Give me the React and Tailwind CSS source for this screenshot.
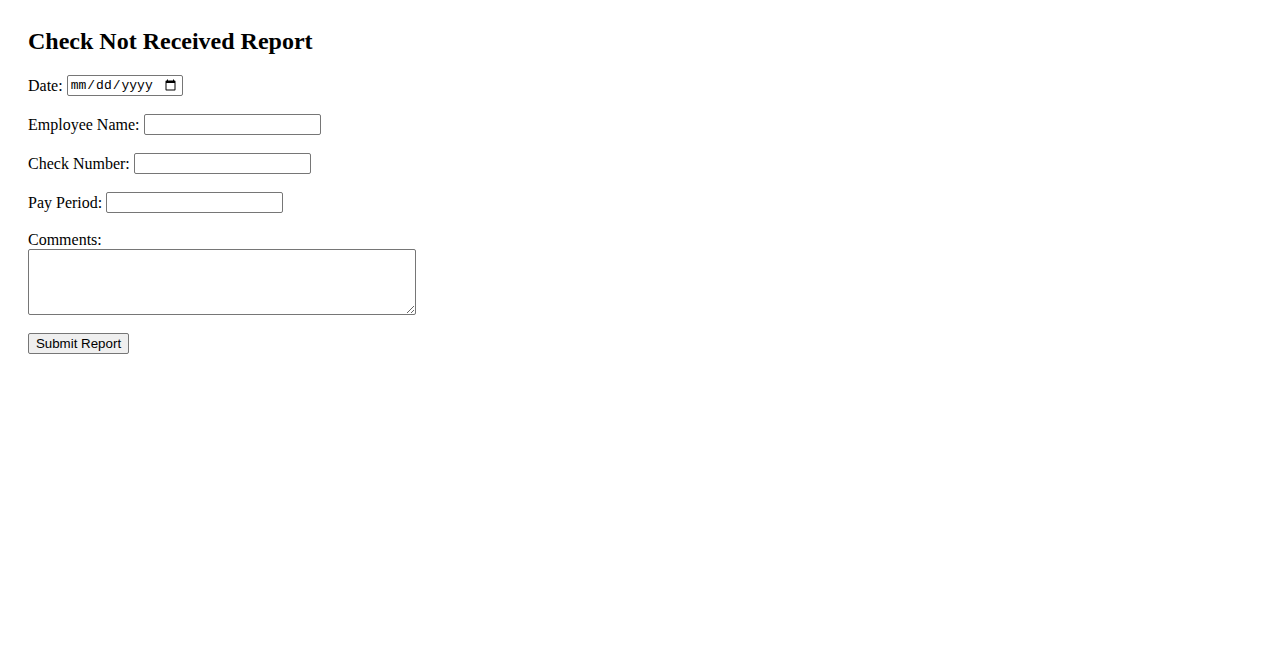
export default function App() {
  const inputCls =
    "box-border h-[21px] w-[177px] rounded-[2px] border border-[#767676] bg-white px-[2px] font-['Liberation_Sans',Arial,sans-serif] text-[13.33px] text-black outline-none";
  return (
    <div className="min-h-[650px] bg-white pl-[28px] pt-[28px] font-['Liberation_Serif','Times_New_Roman',serif] text-[16px] text-black">
      <h2 className="mb-[20px] text-[24px] font-bold leading-[27px]">Check Not Received Report</h2>
      <form onSubmit={(e) => e.preventDefault()}>
        <div className="mb-[18px] flex h-[21px] items-center gap-[4px]">
          <label htmlFor="date" className="leading-[18px]">Date:</label>
          <input
            id="date"
            type="date"
            className="box-border h-[21px] w-[116px] rounded-[2px] border border-[#767676] bg-white pl-[2px] pr-[3px] font-['Liberation_Mono','Courier_New',monospace] text-[13px] text-black outline-none"
          />
        </div>
        <div className="mb-[18px] flex h-[21px] items-center gap-[4px]">
          <label htmlFor="name" className="leading-[18px]">Employee Name:</label>
          <input id="name" type="text" className={inputCls} />
        </div>
        <div className="mb-[18px] flex h-[21px] items-center gap-[4px]">
          <label htmlFor="check" className="leading-[18px]">Check Number:</label>
          <input id="check" type="text" className={inputCls} />
        </div>
        <div className="mb-[18px] flex h-[21px] items-center gap-[4px]">
          <label htmlFor="period" className="leading-[18px]">Pay Period:</label>
          <input id="period" type="text" className={inputCls} />
        </div>
        <div className="mb-[18px] flex flex-col items-start">
          <label htmlFor="comments" className="block leading-[18px]">Comments:</label>
          <textarea
            id="comments"
            className="box-border block h-[66px] w-[388px] rounded-[2px] border border-[#767676] bg-white p-[2px] font-['Liberation_Mono',monospace] text-[13px] text-black outline-none"
          />
        </div>
        <button
          type="submit"
          className="box-border block h-[21px] w-[101px] rounded-[2px] border border-[#767676] bg-[#efefef] px-[6px] font-['Liberation_Sans',Arial,sans-serif] text-[13.33px] leading-[15px] text-black"
        >
          Submit Report
        </button>
      </form>
    </div>
  );
}
